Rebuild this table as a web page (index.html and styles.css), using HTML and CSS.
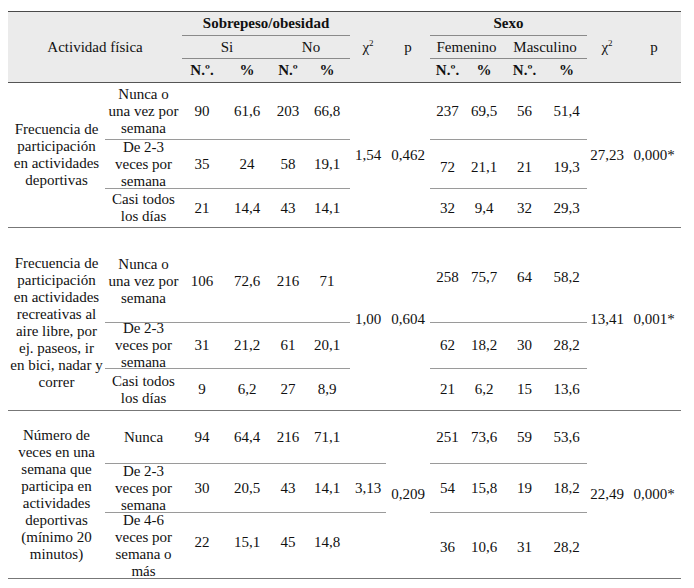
FILE: index.html
```html
<!DOCTYPE html>
<html lang="es">
<head>
<meta charset="utf-8">
<title>Actividad física</title>
<link rel="stylesheet" href="styles.css">
</head>
<body>
<table class="tbl">
  <colgroup>
    <col class="w97"><col class="w77"><col class="w40"><col class="w50"><col class="w32"><col class="w46">
    <col class="w36"><col class="w44"><col class="w35"><col class="w38"><col class="w43"><col class="w41">
    <col class="w40"><col class="w54">
  </colgroup>
  <thead>
    <tr class="hr1">
      <th rowspan="3" colspan="2">Actividad física</th>
      <th colspan="4" class="bold under">Sobrepeso/obesidad</th>
      <th rowspan="3">χ<sup>2</sup></th>
      <th rowspan="3">p</th>
      <th colspan="4" class="bold under">Sexo</th>
      <th rowspan="3">χ<sup>2</sup></th>
      <th rowspan="3">p</th>
    </tr>
    <tr class="hr2">
      <th colspan="2" class="under">Si</th>
      <th colspan="2" class="under">No</th>
      <th colspan="2" class="under">Femenino</th>
      <th colspan="2" class="under">Masculino</th>
    </tr>
    <tr class="hr3">
      <th class="bold">N.º.</th><th class="bold">%</th><th class="bold">N.º</th><th class="bold">%</th>
      <th class="bold">N.º.</th><th class="bold">%</th><th class="bold">N.º.</th><th class="bold">%</th>
    </tr>
  </thead>
  <tbody>
    <tr class="g1a">
      <td rowspan="3" class="main">Frecuencia de<br>participación<br>en actividades<br>deportivas</td>
      <td class="ln"><div class="tx">Nunca o<br>una vez por<br>semana</div></td>
      <td class="ln">90</td><td class="ln">61,6</td><td class="ln">203</td><td class="ln">66,8</td>
      <td rowspan="3">1,54</td><td rowspan="3">0,462</td>
      <td class="ln">237</td><td class="ln">69,5</td><td class="ln">56</td><td class="ln">51,4</td>
      <td rowspan="3">27,23</td><td rowspan="3">0,000*</td>
    </tr>
    <tr class="g1b">
      <td class="ln"><div class="tx">De 2-3<br>veces por<br>semana</div></td>
      <td class="ln">35</td><td class="ln">24</td><td class="ln">58</td><td class="ln">19,1</td>
      <td class="ln pt7">72</td><td class="ln pt7">21,1</td><td class="ln pt7">21</td><td class="ln pt7">19,3</td>
    </tr>
    <tr class="g1c">
      <td><div class="tx">Casi todos<br>los días</div></td>
      <td>21</td><td>14,4</td><td>43</td><td>14,1</td>
      <td>32</td><td>9,4</td><td>32</td><td>29,3</td>
    </tr>
  </tbody>
  <tbody>
    <tr class="g2a">
      <td rowspan="3" class="main pt8">Frecuencia de<br>participación<br>en actividades<br>recreativas al<br>aire libre, por<br>ej. paseos, ir<br>en bici, nadar y<br>correr</td>
      <td class="ln pt12"><div class="tx">Nunca o<br>una vez por<br>semana</div></td>
      <td class="ln pt12">106</td><td class="ln pt12">72,6</td><td class="ln pt12">216</td><td class="ln pt12">71</td>
      <td rowspan="3">1,00</td><td rowspan="3">0,604</td>
      <td class="ln pt5">258</td><td class="ln pt5">75,7</td><td class="ln pt5">64</td><td class="ln pt5">58,2</td>
      <td rowspan="3">13,41</td><td rowspan="3">0,001*</td>
    </tr>
    <tr class="g2b">
      <td class="ln"><div class="tx">De 2-3<br>veces por<br>semana</div></td>
      <td class="ln">31</td><td class="ln">21,2</td><td class="ln">61</td><td class="ln">20,1</td>
      <td class="ln">62</td><td class="ln">18,2</td><td class="ln">30</td><td class="ln">28,2</td>
    </tr>
    <tr class="g2c">
      <td><div class="tx">Casi todos<br>los días</div></td>
      <td>9</td><td>6,2</td><td>27</td><td>8,9</td>
      <td>21</td><td>6,2</td><td>15</td><td>13,6</td>
    </tr>
  </tbody>
  <tbody>
    <tr class="g3a">
      <td rowspan="3" class="main">Número de<br>veces en una<br>semana que<br>participa en<br>actividades<br>deportivas<br>(mínimo 20<br>minutos)</td>
      <td class="ln"><div class="tx">Nunca</div></td>
      <td class="ln">94</td><td class="ln">64,4</td><td class="ln">216</td><td class="ln">71,1</td>
      <td class="ln"></td>
      <td rowspan="3">0,209</td>
      <td class="ln">251</td><td class="ln">73,6</td><td class="ln">59</td><td class="ln">53,6</td>
      <td rowspan="3">22,49</td><td rowspan="3">0,000*</td>
    </tr>
    <tr class="g3b">
      <td class="ln"><div class="tx">De 2-3<br>veces por<br>semana</div></td>
      <td class="ln">30</td><td class="ln">20,5</td><td class="ln">43</td><td class="ln">14,1</td>
      <td class="ln">3,13</td>
      <td class="ln">54</td><td class="ln">15,8</td><td class="ln">19</td><td class="ln">18,2</td>
    </tr>
    <tr class="g3c">
      <td><div class="tx">De 4-6<br>veces por<br>semana o<br>más</div></td>
      <td class="pb6">22</td><td class="pb6">15,1</td><td class="pb6">45</td><td class="pb6">14,8</td>
      <td></td>
      <td class="pt4">36</td><td class="pt4">10,6</td><td class="pt4">31</td><td class="pt4">28,2</td>
    </tr>
  </tbody>
</table>
</body>
</html>
```
FILE: styles.css
```css
html, body {
  margin: 0;
  background: #ffffff;
}

body {
  font-family: "Liberation Serif", "Times New Roman", serif;
  font-size: 15px;
  color: #111111;
}

.tbl {
  margin: 11px 0 0 8px;
  width: 673px;
  table-layout: fixed;
  border-collapse: collapse;
  line-height: 17px;
  border-top: 1px solid #4a4a4a;
}

.w97 { width: 97px; }
.w77 { width: 77px; }
.w40 { width: 40px; }
.w50 { width: 50px; }
.w32 { width: 32px; }
.w46 { width: 46px; }
.w36 { width: 36px; }
.w44 { width: 44px; }
.w35 { width: 35px; }
.w38 { width: 38px; }
.w43 { width: 43px; }
.w41 { width: 41px; }
.w54 { width: 54px; }

.tbl th,
.tbl td {
  padding: 0;
  text-align: center;
  vertical-align: middle;
  font-weight: normal;
  white-space: nowrap;
}

.tbl thead {
  background: #ebebeb;
  border-bottom: 1px solid #555555;
}

.tbl thead th {
  background: #ebebeb;
}

.tbl .bold {
  font-weight: bold;
}

.tbl .under {
  border-bottom: 1px solid #8a8a8a;
}

.tbl sup {
  font-size: 9px;
  line-height: 0;
  vertical-align: 6px;
}

.hr1 { height: 24px; }
.hr2 { height: 23px; }
.hr3 { height: 24px; }

.tbl tbody {
  border-bottom: 1px solid #777777;
}

.tbl td.ln {
  border-bottom: 1px solid #9a9a9a;
}

.tx {
  margin: -5px 0;
}

.g1a { height: 57px; }
.g1b { height: 49px; }
.g1c { height: 39px; }
.g2a { height: 95px; }
.g2b { height: 46px; }
.g2c { height: 42px; }
.g3a { height: 53px; }
.g3b { height: 49px; }
.g3c { height: 66px; }

.tbl .pt4 { padding-top: 4px; }
.tbl .pt5 { padding-top: 5px; }
.tbl .pt7 { padding-top: 7px; }
.tbl .pt8 { padding-top: 8px; }
.tbl .pt12 { padding-top: 12px; }
.tbl .pb6 { padding-bottom: 6px; }
```
